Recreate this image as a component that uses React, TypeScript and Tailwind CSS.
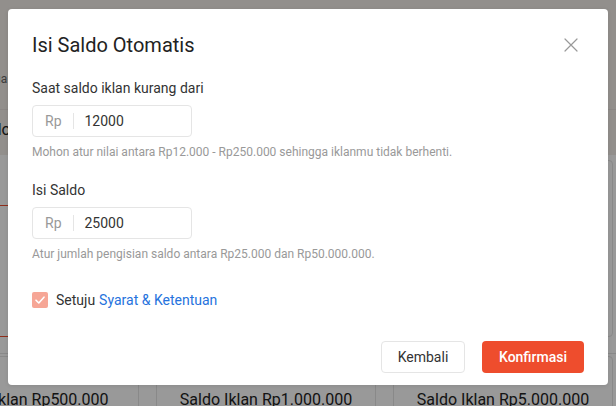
import React from "react";

function CloseIcon() {
  return (
    <svg width="14" height="14" viewBox="0 0 14 14" fill="none">
      <path d="M1 1L13 13M13 1L1 13" stroke="#999999" strokeWidth="1.2" strokeLinecap="round" />
    </svg>
  );
}

function CheckIcon() {
  return (
    <svg width="12" height="12" viewBox="0 0 12 12" fill="none">
      <path d="M2 6.2L4.8 9L10 3.2" stroke="#ffffff" strokeWidth="1.6" strokeLinecap="round" strokeLinejoin="round" />
    </svg>
  );
}

function MoneyInput({ value }: { value: string }) {
  return (
    <div className="flex h-[32px] w-[160px] items-center rounded-[4px] border border-[#e5e5e5] bg-white">
      <span className="pl-[12px] pr-[11px] text-[14px] leading-[20px] text-[#999999]">Rp</span>
      <span className="h-[16px] w-px bg-[#e5e5e5]" />
      <span className="pl-[11px] text-[14px] leading-[20px] text-[#333333]">{value}</span>
    </div>
  );
}

function Page() {
  return (
    <div className="h-[406px] w-[616px] overflow-hidden bg-white">
      <div className="h-[155px] bg-[#f3eeea]">
        <div className="h-[110px] border-b border-[#e8e2de] pt-[66px]">
          <span className="ml-[-30px] text-[12px] text-[#666]">Semua</span>
        </div>
        <div className="pt-[8px]">
          <span className="ml-[-50px] text-[16px] text-[#222]">Isi Saldo</span>
        </div>
      </div>
      <div className="ml-[-81px] flex items-end gap-[17px] pt-[5px]">
        <div className="flex h-[132px] w-[220px] shrink-0 flex-col items-end border border-[#ee4d2d] px-[12px] pt-[34px]">
          <span className="text-[16px] font-bold text-[#222]">Saldo Iklan</span>
          <span className="text-[14px] text-[#666]">Rp</span>
        </div>
        <div className="h-[177px] w-[220px] shrink-0 rounded-[4px] border border-[#e5e5e5]" />
        <div className="h-[177px] w-[220px] shrink-0 rounded-[4px] border border-[#e5e5e5]" />
      </div>
      <div className="mt-[16px] border-t border-[#e5e5e5]" />
      <div className="ml-[-81px] flex gap-[17px] pt-[2px]">
        {["Rp500.000", "Rp1.000.000", "Rp5.000.000"].map((v) => (
          <div key={v} className="flex h-[80px] w-[220px] shrink-0 justify-center rounded-[4px] border border-[#e5e5e5] pt-[33px]">
            <span className="text-[16px] leading-[20px] text-[#222]">Saldo Iklan {v}</span>
          </div>
        ))}
      </div>
    </div>
  );
}

export default function App() {
  return (
    <div className="relative h-[406px] w-[616px] overflow-hidden" style={{ fontFamily: "Roboto, 'Noto Sans', sans-serif" }}>
      <Page />
      <div className="absolute inset-0 bg-black/40 pl-[8px] pt-[9px]">
        <div className="w-[600px] rounded-[4px] bg-white px-[24px] pb-[12px] pt-[24px] shadow-[0_1px_4px_rgba(0,0,0,0.1)]">
          <div className="flex h-[24px] items-center justify-between">
            <h1 className="text-[20px] leading-[24px] text-[#222222]">Isi Saldo Otomatis</h1>
            <span className="mr-[6px] flex items-center">
              <CloseIcon />
            </span>
          </div>
          <div className="mt-[21px] text-[14px] leading-[20px] text-[#333333]">Saat saldo iklan kurang dari</div>
          <div className="mt-[7px]">
            <MoneyInput value="12000" />
          </div>
          <div className="mt-[7px] text-[12px] leading-[16px] text-[#999999]">
            Mohon atur nilai antara Rp12.000 - Rp250.000 sehingga iklanmu tidak berhenti.
          </div>
          <div className="mt-[20px] text-[14px] leading-[20px] text-[#333333]">Isi Saldo</div>
          <div className="mt-[7px]">
            <MoneyInput value="25000" />
          </div>
          <div className="mt-[7px] text-[12px] leading-[16px] text-[#999999]">
            Atur jumlah pengisian saldo antara Rp25.000 dan Rp50.000.000.
          </div>
          <div className="mt-[28px] flex h-[20px] items-center">
            <span className="flex h-[16px] w-[16px] items-center justify-center rounded-[2px] bg-[#f6a696]">
              <CheckIcon />
            </span>
            <span className="ml-[8px] text-[14px] leading-[20px] text-[#333333]">Setuju</span>
            <span className="ml-[4px] text-[14px] leading-[20px] text-[#2673dd]">Syarat &amp; Ketentuan</span>
          </div>
          <div className="mt-[31px] flex justify-end gap-[17px]">
            <button className="h-[32px] w-[84px] rounded-[4px] border border-[#e5e5e5] bg-white text-[14px] text-[#333333]">
              Kembali
            </button>
            <button className="h-[32px] w-[102px] rounded-[4px] bg-[#ee4d2d] text-[14px] font-medium text-white">
              Konfirmasi
            </button>
          </div>
        </div>
      </div>
    </div>
  );
}
